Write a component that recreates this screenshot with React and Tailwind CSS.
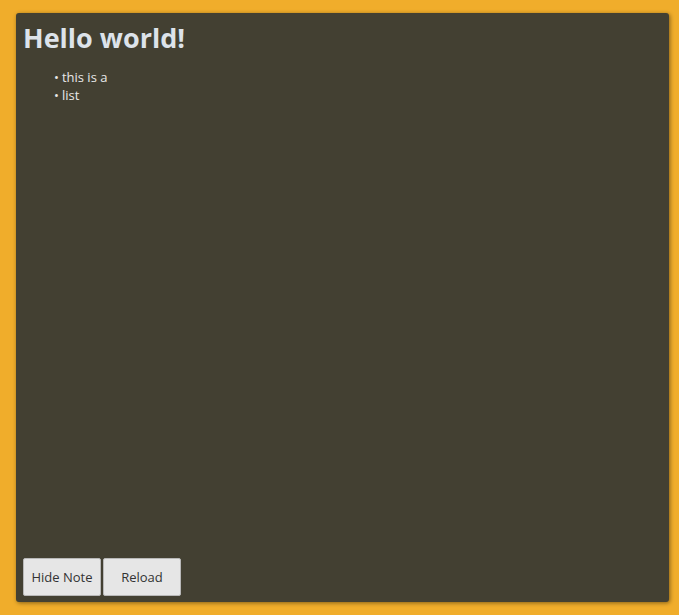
export default function App() {
  return (
    <div className="w-[679px] h-[615px] bg-[#f0ad2b] pt-[13px] pl-[16px] overflow-hidden" style={{ fontFamily: '"Open Sans", sans-serif' }}>
      <div className="w-[653px] h-[589px] bg-[#434032] rounded-[3px] shadow-[1px_1px_4px_rgba(0,0,0,0.45)] flex flex-col px-[7px] pt-[7px] pb-[6px]">
        <h1 className="text-[27px] font-bold text-[#dde3ea] leading-[36px]">Hello world!</h1>
        <ul className="mt-[12px] pl-[31px] text-[13px] leading-[18px] text-[#e8e8e8]">
          <li className="flex gap-[3px]"><span>•</span><span>this is a</span></li>
          <li className="flex gap-[3px]"><span>•</span><span>list</span></li>
        </ul>
        <div className="mt-auto flex gap-[2px]">
          <button className="w-[78px] h-[38px] pt-[1px] bg-[#e6e6e6] border border-[#b8b8b8] rounded-[2px] text-[13px] text-[#333]">Hide Note</button>
          <button className="w-[78px] h-[38px] pt-[1px] bg-[#e6e6e6] border border-[#b8b8b8] rounded-[2px] text-[13px] text-[#333]">Reload</button>
        </div>
      </div>
    </div>
  );
}
